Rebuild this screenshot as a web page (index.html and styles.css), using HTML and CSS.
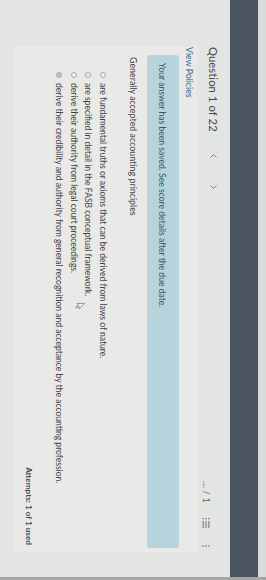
FILE: index.html
```html
<!DOCTYPE html>
<html>
<head>
<meta charset="utf-8">
<link rel="stylesheet" href="styles.css">
</head>
<body>
<div class="screen">
<div class="frame">
  <div class="topstrip"></div>
  <div class="appbar"></div>
  <div class="main">
    <div class="qhead">
      <div class="qtitle">Question 1 of 22</div>
      <div class="qnav">
        <svg class="chev" width="7" height="7" viewBox="0 0 7 7"><polyline points="4.5,0.5 1.5,3.5 4.5,6.5" fill="none" stroke="#7d8082" stroke-width="1"/></svg>
        <svg class="chev" width="7" height="7" viewBox="0 0 7 7"><polyline points="2.5,0.5 5.5,3.5 2.5,6.5" fill="none" stroke="#7d8082" stroke-width="1"/></svg>
      </div>
      <div class="qtools">
        <span class="score">... / 1</span>
        <svg class="listicon" width="10" height="8" viewBox="0 0 10 8"><g fill="#6b6e70"><rect x="0" y="0.5" width="1.3" height="1.3"/><rect x="3" y="0.6" width="7" height="1"/><rect x="0" y="3.4" width="1.3" height="1.3"/><rect x="3" y="3.5" width="7" height="1"/><rect x="0" y="6.2" width="1.3" height="1.3"/><rect x="3" y="6.3" width="7" height="1"/></g></svg>
        <svg class="kebab" width="2" height="8" viewBox="0 0 2 8"><g fill="#6b6e70"><circle cx="1" cy="1" r="0.8"/><circle cx="1" cy="4" r="0.8"/><circle cx="1" cy="7" r="0.8"/></g></svg>
      </div>
    </div>
    <div class="card">
      <div class="policies">View Policies</div>
      <div class="banner">Your answer has been saved. See score details after the due date.</div>
      <div class="question">Generally accepted accounting principles</div>
      <div class="options">
        <div class="opt"><span class="radio"></span><span>are fundamental truths or axioms that can be derived from laws of nature.</span></div>
        <div class="opt"><span class="radio"></span><span>are specified in detail in the FASB conceptual framework.</span></div>
        <div class="opt"><span class="radio"></span><span>derive their authority from legal court proceedings.</span></div>
        <div class="opt"><span class="radio checked"></span><span>derive their credibility and authority from general recognition and acceptance by the accounting profession.</span></div>
      </div>
      <div class="attempts">Attempts: 1 of 1 used</div>
    </div>
  </div>
  <svg class="cursor" width="7" height="10" viewBox="0 0 7 10"><path d="M0.5 0.5 L0.5 8 L2.3 6.3 L3.6 9.3 L4.8 8.8 L3.5 5.9 L6 5.9 Z" fill="#f2f3f1" stroke="#6f7274" stroke-width="0.7" stroke-linejoin="round"/></svg>
</div>
</div>
</body>
</html>
```

FILE: styles.css
```css
html, body {
  margin: 0;
  padding: 0;
  overflow: hidden;
}
body {
  background: #e3e5e2;
  font-family: Lato, "Open Sans", sans-serif;
}
.screen {
  width: 266px;
  height: 580px;
  overflow: hidden;
}
.frame {
  width: 580px;
  height: 266px;
  transform-origin: 0 0;
  transform: translate(266px, 0) rotate(90deg);
  display: flex;
  flex-direction: column;
  background: #e3e5e2;
  box-sizing: border-box;
  border-right: 3px solid #a3a6a5;
  position: relative;
}
.topstrip {
  height: 8px;
  background: #d8dbda;
  flex: none;
}
.appbar {
  height: 28px;
  background: #4a5460;
  flex: none;
}
.main {
  flex: 1;
  display: flex;
  flex-direction: column;
  padding: 0 24px 13px 46px;
}
.qhead {
  height: 33px;
  display: flex;
  align-items: center;
  padding-left: 1px;
  padding-right: 6px;
  flex: none;
}
.qtitle {
  font-size: 11.2px;
  color: #46494b;
  letter-spacing: 0.1px;
  padding-bottom: 1px;
}
.qnav {
  display: flex;
  gap: 23px;
  margin-left: 21px;
}
.chev {
  display: block;
}
.qtools {
  margin-left: auto;
  display: flex;
  align-items: center;
  padding-top: 15px;
}
.score {
  font-size: 8.5px;
  color: #5b5e60;
  letter-spacing: 0.4px;
}
.listicon {
  display: block;
  margin-left: 15px;
}
.kebab {
  display: block;
  margin-left: 17px;
}
.card {
  flex: 1;
  background: #e9eae7;
  display: flex;
  flex-direction: column;
  padding: 0 5px 0 1px;
  color: #3f4244;
}
.policies {
  margin-top: 3px;
  font-size: 8.8px;
  line-height: 10px;
  color: #336c8c;
}
.banner {
  margin: 5px 0 0 8px;
  height: 31px;
  background: #b7d4dc;
  border-radius: 3px;
  display: flex;
  align-items: center;
  padding: 1px 8px 0;
  font-size: 8.6px;
  color: #3c5662;
}
.question {
  margin: 8px 0 0 10px;
  font-size: 8.9px;
  line-height: 12px;
}
.options {
  margin: 17px 0 0 25px;
  display: flex;
  flex-direction: column;
}
.opt {
  display: flex;
  align-items: center;
  height: 14.6px;
  font-size: 8.55px;
  gap: 5px;
}
.radio {
  width: 6px;
  height: 6px;
  border-radius: 50%;
  border: 1px solid #a7aaa9;
  box-sizing: border-box;
  background: #eeefec;
  flex: none;
}
.radio.checked {
  background: #a5a8a7;
  box-shadow: inset 0 0 0 1px #d6d8d6;
}
.attempts {
  margin-top: 17px;
  align-self: flex-end;
  margin-right: 3px;
  font-size: 8.2px;
  line-height: 12px;
  font-weight: 700;
  color: #4a4d4f;
}
.cursor {
  position: absolute;
  left: 303px;
  top: 181px;
}
```
